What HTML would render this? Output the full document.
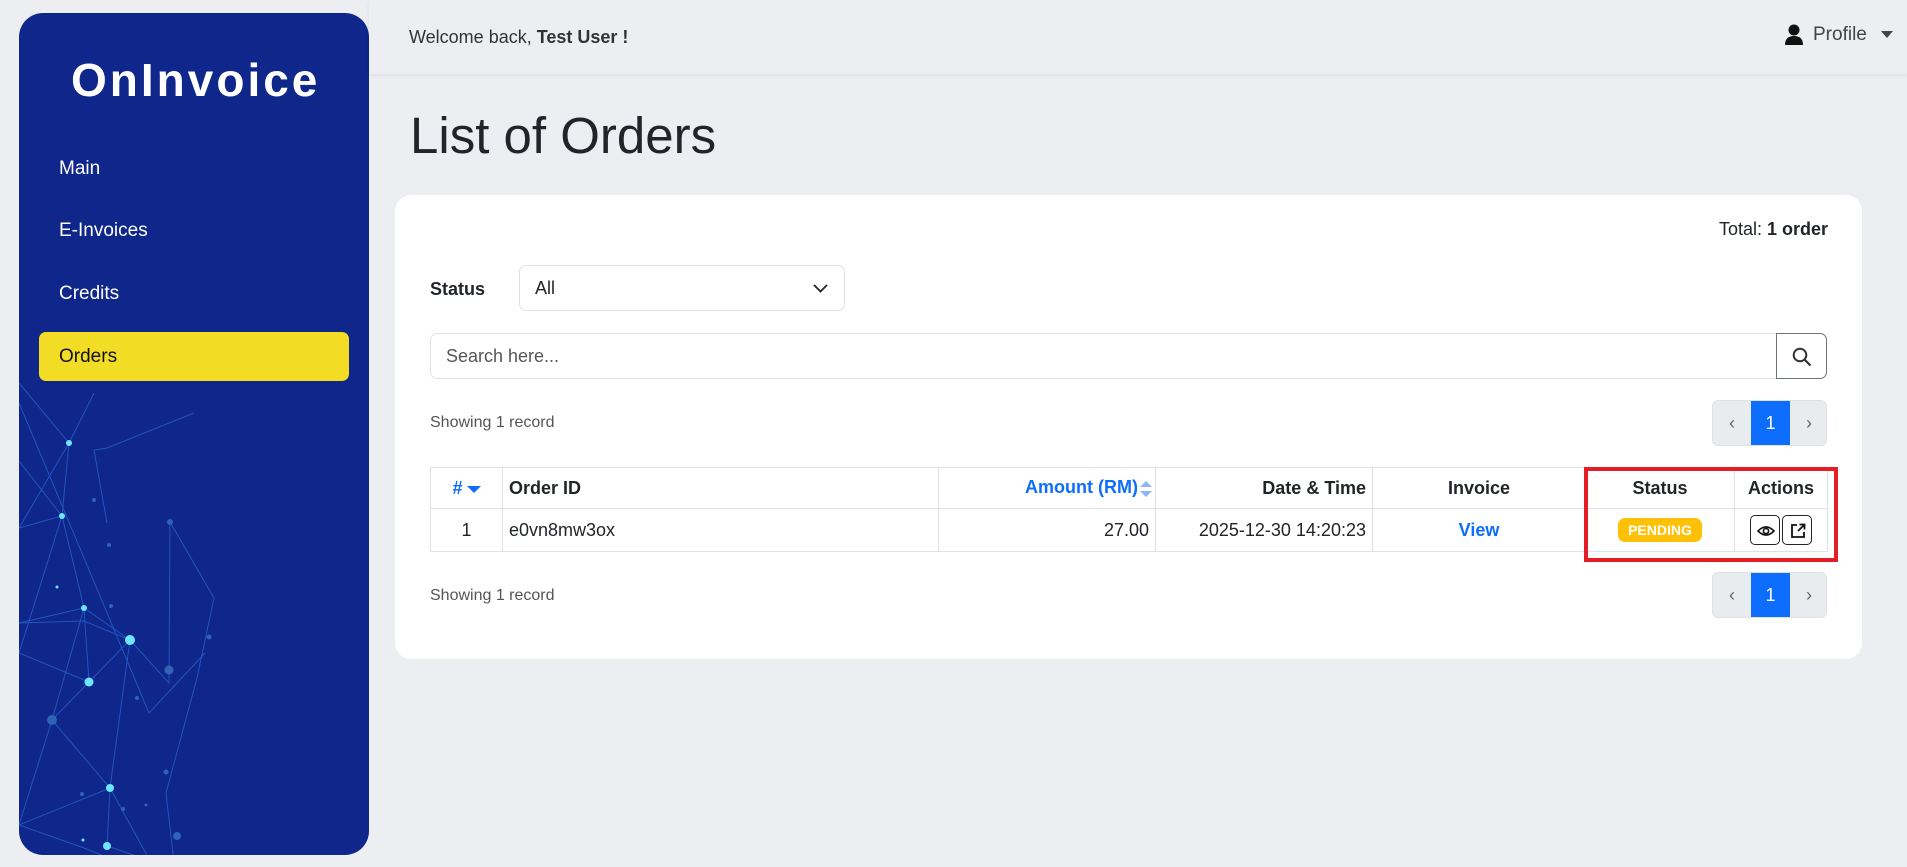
<!DOCTYPE html>
<html><head><meta charset="utf-8"><style>
*{box-sizing:border-box;margin:0;padding:0}
body{width:1907px;height:867px;background:#eceef2;font-family:"Liberation Sans",sans-serif;color:#212529;position:relative;overflow:hidden}
.abs{position:absolute}
#side{left:19px;top:13px;width:350px;height:842px;background:#0f268a;border-radius:24px;overflow:hidden}
.nav{position:absolute;left:20px;width:310px;height:49px;line-height:49px;padding-left:20px;color:#fff;font-size:19px}
#hdr{left:369px;top:0;width:1538px;height:74px;background:#eceef2;box-shadow:0 2px 4px rgba(0,0,0,.06)}
#card{left:395px;top:195px;width:1467px;height:464px;background:#fff;border-radius:16px}
.pg{position:absolute;width:115px;height:46px;border:1px solid #dee2e6;border-radius:6px;background:#e9ecef;overflow:hidden;font-size:18px}
.pg span{position:absolute;top:0;height:46px;line-height:44px;text-align:center}
table{border-collapse:collapse;position:absolute;left:430px;top:467px;font-size:18px}
td,th{border:1px solid #dee2e6;padding:0 6px}
th{height:41px;font-weight:bold}
td{height:43px}
.ib{display:inline-block;width:30px;height:30px;border:1px solid #212529;border-radius:5px;vertical-align:middle;margin:0 1px;position:relative}
.ib svg{position:absolute;left:6px;top:6px}
</style></head><body>
<div id="side" class="abs">
<svg class="abs" style="left:0;top:367px" width="350" height="482" viewBox="0 367 350 482">
<g stroke="#2a6ad8" stroke-width="1" fill="none" opacity=".7">
<polyline points="0,370 50,430 43,503 65,595 111,627 70,669 33,707 91,775 88,833 135,849"/>
<polyline points="0,448 43,503 0,515 50,430 75,380"/>
<polyline points="65,595 0,610 65,608 111,627 150,670 151,509 195,585 178,665 147,780 155,849"/>
<polyline points="43,503 0,640 70,669 65,595 33,707 0,812 91,775 135,855"/>
<polyline points="91,775 111,627"/>
<polyline points="88,510 75,437 88,435 175,400"/>
<polyline points="0,390 130,700 186,640"/>
<polyline points="0,812 65,835 100,849"/>
</g>
<g fill="#6fe6ff">
<circle cx="50" cy="430" r="3"/><circle cx="43" cy="503" r="3"/><circle cx="65" cy="595" r="3"/><circle cx="111" cy="627" r="5"/><circle cx="70" cy="669" r="4.5"/><circle cx="91" cy="775" r="4"/><circle cx="88" cy="833" r="4"/><circle cx="38" cy="574" r="1.5"/><circle cx="64" cy="827" r="1.5"/>
</g>
<g fill="#2f63b8"><circle cx="33" cy="707" r="5"/><circle cx="151" cy="509" r="3"/><circle cx="150" cy="657" r="4.5"/><circle cx="92" cy="593" r="2"/><circle cx="75" cy="487" r="2"/><circle cx="90" cy="532" r="2"/><circle cx="118" cy="685" r="2"/><circle cx="147" cy="759" r="2.5"/><circle cx="158" cy="823" r="4"/><circle cx="190" cy="624" r="2.5"/><circle cx="63" cy="781" r="2"/><circle cx="104" cy="796" r="2"/><circle cx="127" cy="792" r="1.5"/></g>
</svg>
<div class="abs" style="left:52px;top:40px;color:#fff;font-size:46px;font-weight:bold;letter-spacing:3px">OnInvoice</div>
<div class="nav" style="top:131px">Main</div>
<div class="nav" style="top:193px">E-Invoices</div>
<div class="nav" style="top:256px">Credits</div>
<div class="nav" style="top:319px;background:#f2dc24;color:#111;border-radius:7px">Orders</div>
</div>
<div id="hdr" class="abs">
<div class="abs" style="left:40px;top:27px;font-size:18px;color:#333">Welcome back, <b>Test User !</b></div>
<svg class="abs" style="left:1415px;top:24px" width="20" height="22" viewBox="0 0 20 22"><circle cx="10" cy="6" r="5.5" fill="#111"/><path d="M1 21 Q1 12 10 12 Q19 12 19 21Z" fill="#111"/></svg>
<div class="abs" style="left:1444px;top:24px;font-size:19px;color:#444">Profile</div>
<svg class="abs" style="left:1512px;top:31px" width="12" height="8"><path d="M0 0H12L6 7Z" fill="#444"/></svg>
</div>
<div class="abs" style="left:410px;top:106px;font-size:51px;color:#212529">List of Orders</div>
<div id="card" class="abs"></div>
<div class="abs" style="right:79px;top:219px;font-size:18px">Total: <b>1 order</b></div>
<div class="abs" style="left:430px;top:279px;font-size:18px;font-weight:bold">Status</div>
<div class="abs" style="left:519px;top:265px;width:326px;height:46px;border:1px solid #dee2e6;border-radius:7px;font-size:18px;line-height:44px;padding-left:15px">All
<svg class="abs" style="right:16px;top:18px" width="15" height="9"><path d="M1 1L7.5 7.5L14 1" stroke="#222" stroke-width="1.8" fill="none"/></svg></div>
<div class="abs" style="left:430px;top:333px;width:1397px;height:46px;border:1px solid #dee2e6;border-radius:7px;font-size:18px;line-height:44px;padding-left:15px;color:#555">Search here...</div>
<div class="abs" style="left:1776px;top:333px;width:51px;height:46px;border:1px solid #6c757d;border-radius:0 7px 7px 0;background:#fff">
<svg class="abs" style="left:15px;top:13px" width="20" height="20"><circle cx="8" cy="8" r="6.3" stroke="#333" stroke-width="2" fill="none"/><path d="M12.5 12.5L18.5 18.5" stroke="#333" stroke-width="2.2"/></svg></div>
<div class="abs" style="left:430px;top:414px;font-size:16px;color:#555">Showing 1 record</div>
<div class="pg" style="left:1712px;top:400px"><span style="left:0;width:38px;color:#666">‹</span><span style="left:38px;width:39px;background:#0d6efd;color:#fff">1</span><span style="left:77px;width:38px;color:#666">›</span></div>
<table>
<tr><th style="width:72px;color:#0d6efd">#<svg width="14" height="9" style="margin-left:4px"><path d="M0 1H14L7 8Z" fill="#0d6efd"/></svg></th><th style="width:436px;text-align:left">Order ID</th><th style="width:217px;text-align:right;color:#0d6efd;padding-right:2px">Amount (RM)<svg width="14" height="20" style="vertical-align:middle;margin-left:1px"><path d="M1 8H13L7 2Z M1 12H13L7 18Z" fill="#8fb5f8"/></svg></th><th style="width:217px;text-align:right">Date &amp; Time</th><th style="width:213px">Invoice</th><th style="width:149px">Status</th><th style="width:93px">Actions</th></tr>
<tr><td style="text-align:center">1</td><td>e0vn8mw3ox</td><td style="text-align:right">27.00</td><td style="text-align:right">2025-12-30 14:20:23</td><td style="text-align:center;color:#0d6efd;font-weight:bold">View</td><td style="text-align:center"><span style="display:inline-block;background:#ffc107;color:#fff;font-weight:bold;font-size:14px;padding:4px 10px;border-radius:7px">PENDING</span></td><td style="text-align:center;padding:0 2px"><span class="ib"><svg width="18" height="18" viewBox="0 0 18 18"><path d="M1 9Q9 1 17 9Q9 17 1 9Z" stroke="#111" stroke-width="1.6" fill="none"/><circle cx="9" cy="9" r="2.6" stroke="#111" stroke-width="1.6" fill="none"/></svg></span><span class="ib"><svg width="18" height="18" viewBox="0 0 18 18"><path d="M8 3H3V15H15V10" stroke="#111" stroke-width="1.8" fill="none"/><path d="M9 9L15.5 2.5M10.5 2.5H15.5V7.5" stroke="#111" stroke-width="1.8" fill="none"/></svg></span></td></tr>
</table>
<div class="abs" style="left:1584px;top:467px;width:254px;height:95px;border:4px solid #e41e26"></div>
<div class="abs" style="left:430px;top:587px;font-size:16px;color:#555">Showing 1 record</div>
<div class="pg" style="left:1712px;top:572px"><span style="left:0;width:38px;color:#666">‹</span><span style="left:38px;width:39px;background:#0d6efd;color:#fff">1</span><span style="left:77px;width:38px;color:#666">›</span></div>
</body></html>
